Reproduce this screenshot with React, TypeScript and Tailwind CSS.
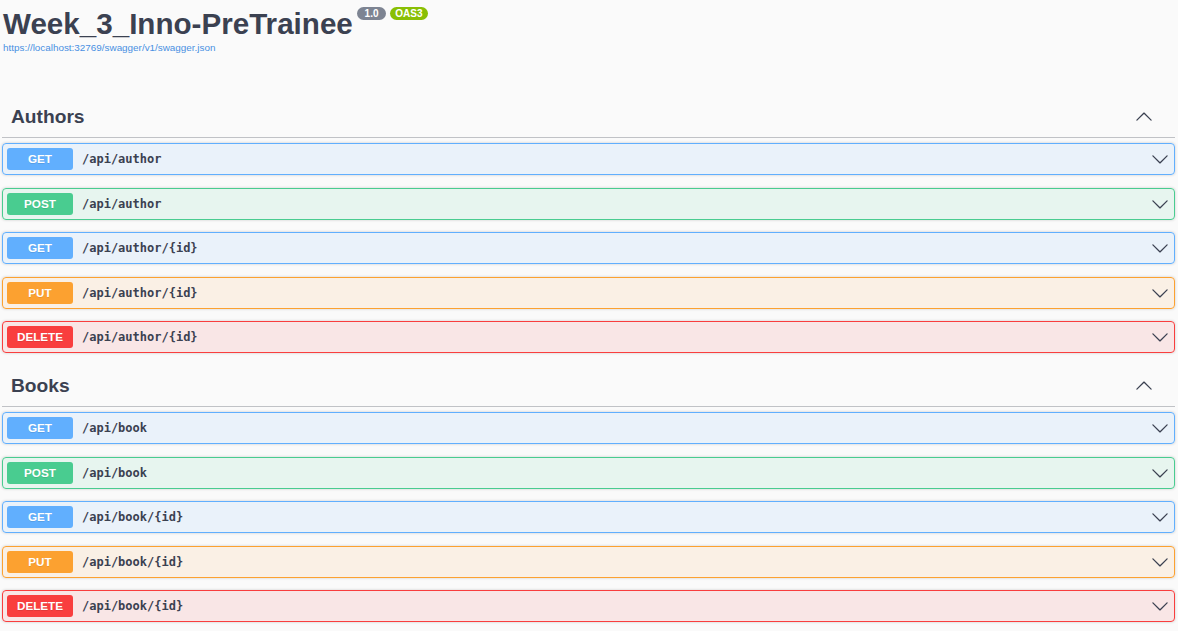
import React from "react"

type Method = "GET" | "POST" | "PUT" | "DELETE"

const methodStyles: Record<Method, { row: string; badge: string }> = {
  GET: { row: "border-[#61affe] bg-[#61affe]/10", badge: "bg-[#61affe]" },
  POST: { row: "border-[#49cc90] bg-[#49cc90]/10", badge: "bg-[#49cc90]" },
  PUT: { row: "border-[#fca130] bg-[#fca130]/10", badge: "bg-[#fca130]" },
  DELETE: { row: "border-[#f93e3e] bg-[#f93e3e]/10", badge: "bg-[#f93e3e]" },
}

const sections: { tag: string; ops: { method: Method; path: string }[] }[] = [
  {
    tag: "Authors",
    ops: [
      { method: "GET", path: "/api/author" },
      { method: "POST", path: "/api/author" },
      { method: "GET", path: "/api/author/{id}" },
      { method: "PUT", path: "/api/author/{id}" },
      { method: "DELETE", path: "/api/author/{id}" },
    ],
  },
  {
    tag: "Books",
    ops: [
      { method: "GET", path: "/api/book" },
      { method: "POST", path: "/api/book" },
      { method: "GET", path: "/api/book/{id}" },
      { method: "PUT", path: "/api/book/{id}" },
      { method: "DELETE", path: "/api/book/{id}" },
    ],
  },
]

function Arrow({ up = false }: { up?: boolean }) {
  return (
    <svg
      width="18"
      height="18"
      viewBox="0 0 20 20"
      className={`shrink-0 fill-[#3b4151] ${up ? "rotate-180" : ""}`}
    >
      <path d="M17.418 6.109c.272-.268.709-.268.979 0s.271.701 0 .969l-7.908 7.83c-.27.268-.707.268-.979 0l-7.908-7.83c-.27-.268-.27-.701 0-.969.271-.268.709-.268.979 0L10 13.25l7.418-7.141z" />
    </svg>
  )
}

function OpRow({ method, path }: { method: Method; path: string }) {
  const s = methodStyles[method]
  return (
    <div
      className={`flex h-[32px] items-center rounded-[4px] border p-[4px] shadow-[0_0_3px_rgba(0,0,0,0.19)] ${s.row}`}
    >
      <span
        className={`flex h-[22px] w-[66px] shrink-0 items-center justify-center rounded-[3px] text-[11.7px] font-bold text-white [text-shadow:0_1px_0_rgba(0,0,0,0.1)] ${s.badge}`}
      >
        {method}
      </span>
      <span className="ml-[9px] flex-1 font-['DejaVu_Sans_Mono',monospace] text-[12px] font-bold text-[#3b4151]">
        {path}
      </span>
      <span className="mr-[1px]">
        <Arrow />
      </span>
    </div>
  )
}

export default function App() {
  return (
    <div className="min-h-screen bg-[#fafafa] pb-[9px] font-['Liberation_Sans',Arial,sans-serif]">
      <div className="ml-[2px] mr-[3px]">
        {/* Info */}
        <div className="flex items-start pl-[1px] pt-[7px]">
          <h2 className="text-[29.6px] font-bold leading-[33px] text-[#3b4151]">Week_3_Inno-PreTrainee</h2>
          <span className="ml-[4px] h-[13px] whitespace-pre rounded-full bg-[#7d8492] px-[5px] text-[10px] font-bold leading-[13px] text-white">
            {" 1.0 "}
          </span>
          <span className="ml-[4px] h-[13px] rounded-full bg-[#89bf04] px-[5px] text-[10px] font-bold leading-[13px] text-white">
            OAS3
          </span>
        </div>
        <a className="mt-[2px] block pl-[1px] text-[9.9px] leading-[11px] text-[#4990e2]">
          https://localhost:32769/swagger/v1/swagger.json
        </a>

        {/* Tags */}
        <div className="mt-[44px] flex flex-col gap-[13px]">
          {sections.map((sec) => (
            <section key={sec.tag}>
              <div className="flex h-[41px] items-center border-b border-[#3b4151]/30 pl-[9px] pr-[22px]">
                <h3 className="flex-1 text-[19.2px] font-bold text-[#3b4151]">{sec.tag}</h3>
                <Arrow up />
              </div>
              <div className="mt-[5px] flex flex-col gap-[12.5px]">
                {sec.ops.map((op, i) => (
                  <OpRow key={i} method={op.method} path={op.path} />
                ))}
              </div>
            </section>
          ))}
        </div>
      </div>
    </div>
  )
}
